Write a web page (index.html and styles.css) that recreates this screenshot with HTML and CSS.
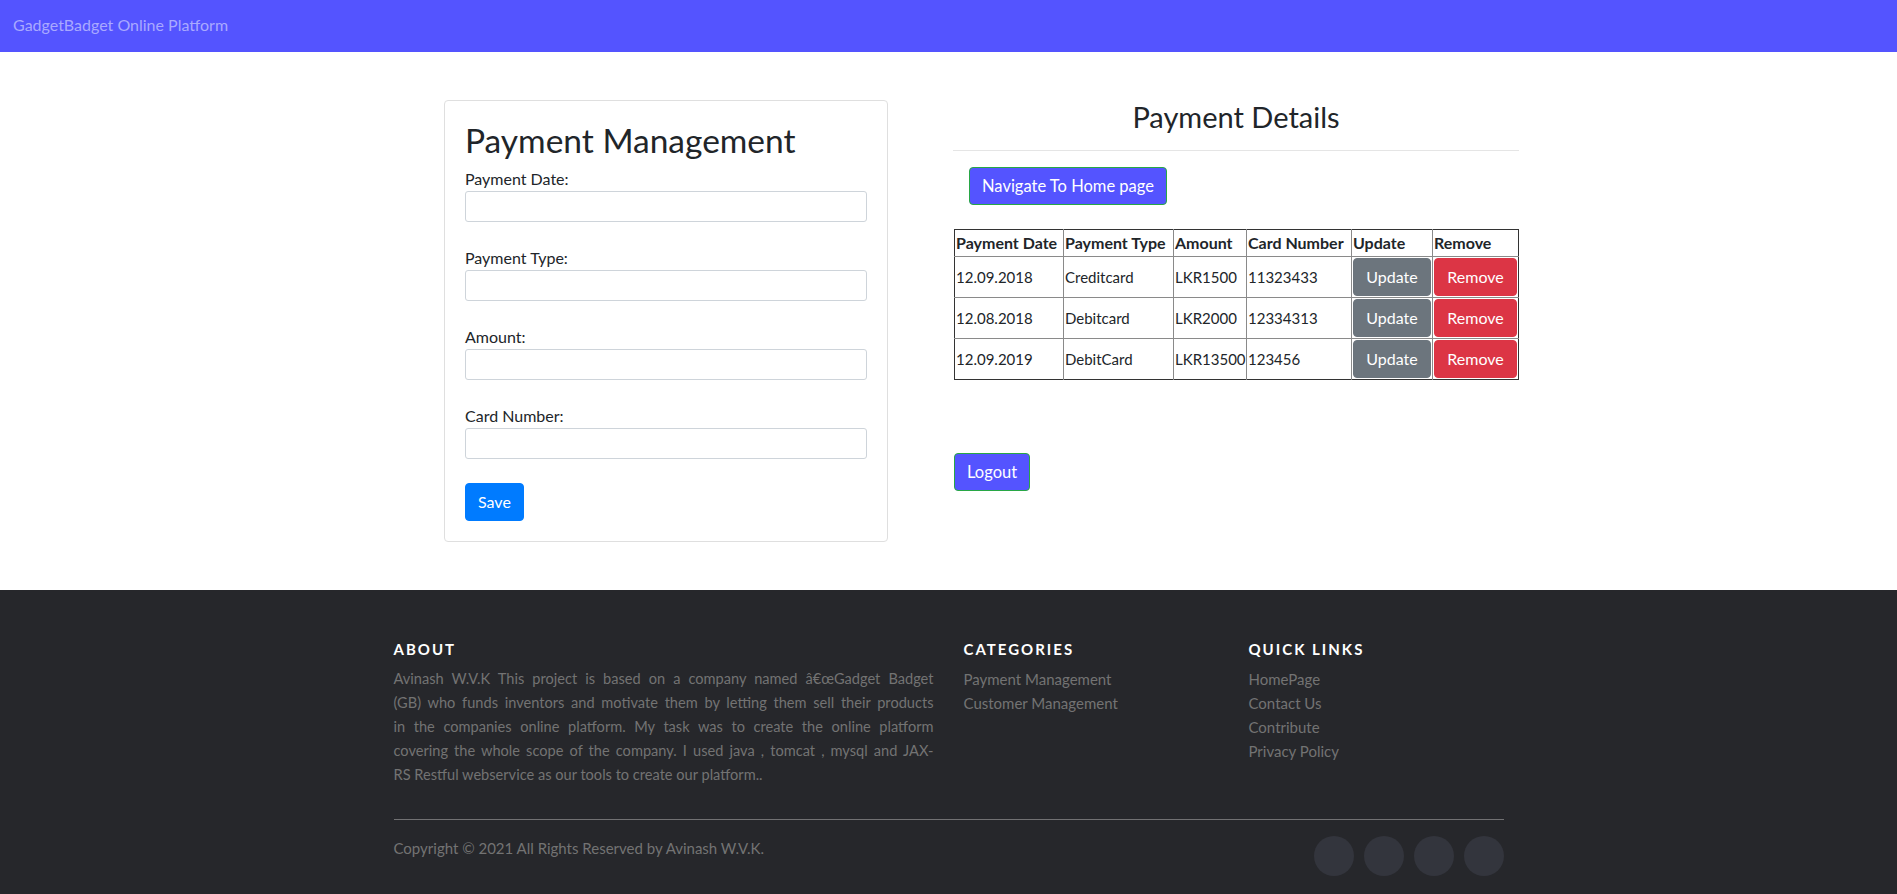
FILE: index.html
```html
<!DOCTYPE html>
<html lang="en">
<head>
<meta charset="utf-8">
<title>Payment Management</title>
<link rel="stylesheet" href="styles.css">
</head>
<body>
<nav class="navbar"><span class="brand">GadgetBadget Online Platform</span></nav>

<main class="main">
  <section class="card">
    <h2 class="card-title">Payment Management</h2>
    <form class="pay-form">
      <label class="field-label">Payment Date:</label>
      <input class="field-input" type="text">
      <label class="field-label">Payment Type:</label>
      <input class="field-input" type="text">
      <label class="field-label">Amount:</label>
      <input class="field-input" type="text">
      <label class="field-label">Card Number:</label>
      <input class="field-input" type="text">
      <button class="btn btn-save" type="button">Save</button>
    </form>
  </section>

  <section class="details">
    <h3 class="details-title">Payment Details</h3>
    <hr class="details-rule">
    <button class="btn btn-nav" type="button">Navigate To Home page</button>
    <table class="pay-table">
      <colgroup>
        <col class="c1"><col class="c2"><col class="c3"><col class="c4"><col class="c5"><col class="c6">
      </colgroup>
      <thead>
        <tr><th>Payment Date</th><th>Payment Type</th><th>Amount</th><th>Card Number</th><th>Update</th><th>Remove</th></tr>
      </thead>
      <tbody>
        <tr><td>12.09.2018</td><td>Creditcard</td><td>LKR1500</td><td>11323433</td><td><button class="btn btn-update" type="button">Update</button></td><td><button class="btn btn-remove" type="button">Remove</button></td></tr>
        <tr><td>12.08.2018</td><td>Debitcard</td><td>LKR2000</td><td>12334313</td><td><button class="btn btn-update" type="button">Update</button></td><td><button class="btn btn-remove" type="button">Remove</button></td></tr>
        <tr><td>12.09.2019</td><td>DebitCard</td><td>LKR13500</td><td>123456</td><td><button class="btn btn-update" type="button">Update</button></td><td><button class="btn btn-remove" type="button">Remove</button></td></tr>
      </tbody>
    </table>
    <button class="btn btn-nav btn-logout" type="button">Logout</button>
  </section>
</main>

<footer class="site-footer">
  <div class="footer-inner">
    <div class="footer-top">
      <div class="footer-col">
        <h6 class="footer-heading">About</h6>
        <p class="about-text">
          <span class="jline">Avinash W.V.K This project is based on a company named â€œGadget Badget</span>
          <span class="jline">(GB) who funds inventors and motivate them by letting them sell their products</span>
          <span class="jline">in the companies online platform. My task was to create the online platform</span>
          <span class="jline">covering the whole scope of the company. I used java , tomcat , mysql and JAX-</span>
          <span class="lline">RS Restful webservice as our tools to create our platform..</span>
        </p>
      </div>
      <div class="footer-col">
        <h6 class="footer-heading">Categories</h6>
        <ul class="footer-links">
          <li><a href="#">Payment Management</a></li>
          <li><a href="#">Customer Management</a></li>
        </ul>
      </div>
      <div class="footer-col">
        <h6 class="footer-heading">Quick Links</h6>
        <ul class="footer-links">
          <li><a href="#">HomePage</a></li>
          <li><a href="#">Contact Us</a></li>
          <li><a href="#">Contribute</a></li>
          <li><a href="#">Privacy Policy</a></li>
        </ul>
      </div>
    </div>
    <hr class="footer-rule">
    <div class="footer-bottom">
      <p class="copyright">Copyright © 2021 All Rights Reserved by Avinash W.V.K.</p>
      <ul class="social">
        <li class="social-dot"></li>
        <li class="social-dot"></li>
        <li class="social-dot"></li>
        <li class="social-dot"></li>
      </ul>
    </div>
  </div>
</footer>
</body>
</html>
```

FILE: styles.css
```css
* { box-sizing: border-box; }

body {
  margin: 0;
  font-family: Lato, "Noto Sans", sans-serif;
  font-size: 16px;
  line-height: 24px;
  color: #212529;
  background: #fff;
}

/* navbar */
.navbar {
  height: 52px;
  background: #5454ff;
  display: flex;
  align-items: center;
  padding: 0 0 2px 13px;
}
.brand {
  color: #a9a9ff;
  font-size: 16px;
  line-height: 24px;
}

/* main */
.main {
  width: 1140px;
  margin: 0 auto;
  padding: 48px 0 48px 65.5px;
  display: flex;
  align-items: flex-start;
  gap: 65px;
}

.card {
  flex: 0 0 444px;
  border: 1px solid #dfdfdf;
  border-radius: 4px;
  padding: 20px;
}
.card-title {
  margin: 0 0 8px;
  font-size: 33.5px;
  line-height: 38px;
  font-weight: 400;
}
.pay-form {
  display: flex;
  flex-direction: column;
  align-items: flex-start;
}
.field-label {
  font-size: 16px;
  line-height: 24px;
}
.field-input {
  width: 100%;
  height: 31px;
  margin: 0 0 24px;
  border: 1px solid #ced4da;
  border-radius: 3px;
  font: inherit;
}

.btn {
  font-family: inherit;
  font-size: 16px;
  line-height: 24px;
  padding: 6px 12px;
  border-radius: 4px;
  border: 1px solid transparent;
  color: #fff;
  cursor: pointer;
}
.btn-save {
  background: #007bff;
  border-color: #007bff;
}

.details {
  flex: 1 1 auto;
  display: flex;
  flex-direction: column;
  align-items: flex-start;
}
.details-title {
  align-self: stretch;
  margin: 0;
  text-align: center;
  font-size: 29px;
  line-height: 34px;
  font-weight: 400;
}
.details-rule {
  align-self: stretch;
  margin: 16px 0;
  border: 0;
  border-top: 1px solid #e5e5e5;
}
.btn-nav {
  margin-left: 16px;
  background: #5454ff;
  border-color: #28a745;
  font-size: 16.5px;
}
.btn-logout {
  margin: 73px 0 0 1px;
}

.pay-table {
  margin: 24px 0 0 1px;
  width: 564px;
  table-layout: fixed;
  border-collapse: collapse;
  border: 1px solid #333;
  font-size: 15px;
}
.c1 { width: 109px; }
.c2 { width: 110px; }
.c3 { width: 73px; }
.c4 { width: 105px; }
.c5 { width: 81px; }
.c6 { width: 86px; }
.pay-table th,
.pay-table td {
  border: 1px solid #8a8a8a;
  padding: 1px;
  text-align: left;
  line-height: 24px;
  white-space: nowrap;
}
.pay-table th {
  font-weight: 700;
  font-size: 16px;
}
.pay-table tr > :first-child { border-left: none; }
.pay-table tr > :last-child { border-right: none; }
.pay-table thead tr > * { border-top: none; }
.pay-table tbody tr:last-child > * { border-bottom: none; }
.btn-update,
.btn-remove {
  display: block;
  width: 100%;
  height: 38px;
  padding: 6px 0;
}
.btn-update { background: #6c757d; border-color: #6c757d; }
.btn-remove { background: #dc3545; border-color: #dc3545; }

/* footer */
.site-footer {
  background: #26272b;
  padding: 45px 0 20px;
  color: #737373;
  font-size: 15px;
  line-height: 24px;
}
.footer-inner {
  width: 1110px;
  margin: 0 auto;
}
.footer-top {
  display: grid;
  grid-template-columns: 570px 285px 255px;
}
.footer-heading {
  margin: 5px 0 8px;
  color: #fff;
  font-size: 15px;
  line-height: 19px;
  font-weight: 700;
  letter-spacing: 2px;
  text-transform: uppercase;
}
.about-text {
  width: 540px;
  margin: 0 0 16px;
  font-size: 14.6px;
}
.jline {
  display: block;
  text-align: justify;
  text-align-last: justify;
}
.lline { display: block; }
.footer-links {
  list-style: none;
  margin: 0;
  padding: 0;
}
.footer-links a {
  color: #737373;
  text-decoration: none;
}
.footer-rule {
  margin: 16px 0;
  border: 0;
  border-top: 1px solid #bbb;
  opacity: 0.5;
}
.footer-bottom {
  display: flex;
  justify-content: space-between;
  align-items: flex-start;
}
.copyright {
  margin: 0;
}
.social {
  display: flex;
  gap: 10px;
  list-style: none;
  margin: 0;
  padding: 0;
}
.social-dot {
  width: 40px;
  height: 40px;
  border-radius: 50%;
  background: #33353d;
}
```
